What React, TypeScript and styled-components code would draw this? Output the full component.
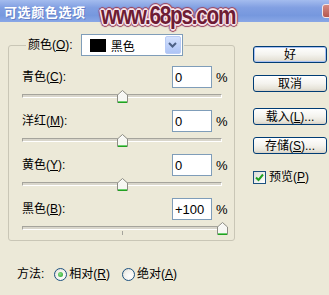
import React from "react";
import styled, { createGlobalStyle } from "styled-components";

const Global = createGlobalStyle`
  html, body { margin: 0; padding: 0; background: #ece9d8; }
  body {
    font-family: "Liberation Sans", "Noto Sans CJK SC", sans-serif;
    font-size: 12px;
    color: #000;
  }
  * { box-sizing: border-box; }
`;

const Window = styled.div`
  position: relative;
  width: 329px;
  height: 295px;
  overflow: hidden;
  background: #ece9d8;
  display: flex;
  flex-direction: column;
`;

const TitleBar = styled.div`
  height: 22px;
  flex: none;
  display: flex;
  align-items: center;
  padding-left: 4px;
  background: linear-gradient(180deg, #a4bcee 0%, #819fe2 35%, #7698de 70%, #89a7e6 100%);
`;

const Title = styled.span`
  color: #fff;
  font-family: "Noto Sans CJK SC", sans-serif;
  font-size: 13px;
  font-weight: bold;
  letter-spacing: 0.6px;
  text-shadow: 1px 1px 0 rgba(50, 70, 150, 0.35);
`;

const CloseBtn = styled.div`
  margin-left: auto;
  margin-right: -14px;
  width: 21px;
  height: 14px;
  border: 1px solid #f3e6e6;
  border-radius: 3px;
  background: linear-gradient(180deg, #d58a82, #b5574f);
`;

const Watermark = styled.div`
  position: absolute;
  left: 101px;
  top: 1px;
  font-family: "Liberation Sans", Arial, sans-serif;
  font-weight: bold;
  font-size: 25px;
  letter-spacing: -1.5px;
  transform: scaleX(0.83);
  transform-origin: left top;
  color: #6e1c35;
  text-shadow:
    1px 0 0 #f8e6ec, -1px 0 0 #f8e6ec, 0 1px 0 #f8e6ec, 0 -1px 0 #f8e6ec,
    1px 1px 0 #f8e6ec, -1px -1px 0 #f8e6ec, 1px -1px 0 #f8e6ec, -1px 1px 0 #f8e6ec,
    2px 0 0 #edc9d6, -2px 0 0 #edc9d6, 0 2px 0 #edc9d6, 0 -2px 0 #edc9d6,
    2px 2px 1px #9a4a64, -2px -2px 1px #9a4a64, 2px -2px 1px #9a4a64, -2px 2px 1px #9a4a64,
    3px 0 1px #9a4a64, -3px 0 1px #9a4a64, 0 3px 1px #9a4a64, 0 -3px 1px #9a4a64;
`;

const Body = styled.div`
  display: flex;
  align-items: flex-start;
  flex: none;
`;

const GroupBox = styled.div`
  margin: 23px 0 0 8px;
  width: 227px;
  height: 196px;
  border: 1px solid #c9c6b6;
  border-radius: 3px;
  padding-left: 13px;
  display: flex;
  flex-direction: column;
`;

const Legend = styled.div`
  align-self: flex-start;
  display: flex;
  align-items: center;
  gap: 8px;
  height: 22px;
  margin: -12px 0 0 4px;
  padding: 0 1px 0 2px;
  background: #ece9d8;
`;

const Label = styled.span`
  white-space: nowrap;
  font-size: 12px;
  line-height: 14px;
`;

const Select = styled.div`
  width: 102px;
  height: 22px;
  border: 1px solid #7f9db9;
  background: #fff;
  display: flex;
  align-items: center;
  padding-left: 8px;
`;

const Swatch = styled.div<{ $color: string }>`
  width: 16px;
  height: 13px;
  background: ${(p) => p.$color};
`;

const SelectText = styled.span`
  margin-left: 5px;
  font-size: 12px;
`;

const ArrowBtn = styled.div`
  margin-left: auto;
  margin-right: 1px;
  width: 16px;
  height: 18px;
  border: 1px solid #b8cbf5;
  border-radius: 2px;
  background: linear-gradient(180deg, #d4e1fd 0%, #bccff9 60%, #aec4f5 100%);
  display: flex;
  align-items: center;
  justify-content: center;
`;

const Rows = styled.div`
  margin-top: 10px;
  display: flex;
  flex-direction: column;
`;

const Row = styled.div`
  display: grid;
  grid-template-columns: 146px 40px auto;
  column-gap: 4px;
  align-items: center;
  height: 22px;
  width: 204px;
`;

const NumBox = styled.div`
  height: 22px;
  border: 1px solid #7f9db9;
  background: #fff;
  display: flex;
  align-items: center;
  padding-left: 2px;
  font-family: "Liberation Sans", sans-serif;
  font-size: 13px;
`;

const Pct = styled.span`
  font-family: "Liberation Sans", sans-serif;
  font-size: 13px;
`;

const Slider = styled.div`
  position: relative;
  width: 200px;
  height: 22px;
  padding-top: 6px;
`;

const Track = styled.div`
  height: 4px;
  border-top: 1px solid #a5a49c;
  border-left: 1px solid #a5a49c;
  border-bottom: 1px solid #ffffff;
  border-right: 1px solid #ffffff;
  background: #d9d6cb;
`;

const Tick = styled.div`
  position: absolute;
  left: 100px;
  top: 11px;
  width: 1px;
  height: 4px;
  background: #a5a49c;
`;

const ThumbWrap = styled.div`
  position: absolute;
  top: 2px;
  width: 11px;
  height: 13px;
`;

const RightCol = styled.div`
  margin: 24px 0 0 18px;
  display: flex;
  flex-direction: column;
`;

const Button = styled.div<{ $default?: boolean; $gap?: number }>`
  width: 74px;
  height: 17px;
  margin-top: ${(p) => p.$gap ?? 0}px;
  border: 1px solid #003c74;
  border-radius: 3px;
  background: linear-gradient(180deg, #ffffff 0%, #f4f3ee 50%, #e6e3d8 85%, #d6d0c5 100%);
  box-shadow: ${(p) => (p.$default ? "inset 0 0 0 1px #a9c1f2" : "none")};
  display: flex;
  align-items: center;
  justify-content: center;
  font-size: 12px;
  line-height: 14px;
`;

const CheckRow = styled.div`
  margin-top: 16px;
  display: flex;
  align-items: center;
  gap: 3px;
`;

const CheckBox = styled.div`
  width: 13px;
  height: 13px;
  border: 1px solid #1c5180;
  background: linear-gradient(135deg, #dcdcd7, #ffffff);
  display: flex;
  align-items: center;
  justify-content: center;
`;

const Footer = styled.div`
  margin-top: 26px;
  height: 14px;
  padding-left: 17px;
  display: flex;
  align-items: center;
`;

const Radio = styled.div<{ $gap: number }>`
  margin-left: ${(p) => p.$gap}px;
  margin-right: 2px;
  width: 13px;
  height: 13px;
  border-radius: 50%;
  border: 1px solid #1c5180;
  background: radial-gradient(circle at 65% 65%, #ffffff 0%, #f2f1ec 55%, #d4d2c8 100%);
  display: flex;
  align-items: center;
  justify-content: center;
`;

const Dot = styled.div`
  width: 5px;
  height: 5px;
  border-radius: 50%;
  background: radial-gradient(circle at 40% 40%, #8be08b, #21a121);
`;

const Thumb = ({ value }: { value: number }) => (
  <ThumbWrap style={{ left: `${100.5 + value - 5.5}px` }}>
    <svg width="11" height="13" viewBox="0 0 11 13">
      <path d="M0.5 5 L5.5 0.5 L10.5 5 L10.5 12.5 L0.5 12.5 Z" fill="#f7f7f3" stroke="#8d8c84" />
      <path d="M1 11.5 H10" stroke="#6fcf6f" />
      <path d="M1 12.5 H10" stroke="#21a121" />
      <path d="M1.5 5.3 L5.5 1.7" stroke="#ffffff" />
    </svg>
  </ThumbWrap>
);

const channels = [
  { name: "青色", key: "C", value: 0 },
  { name: "洋红", key: "M", value: 0 },
  { name: "黄色", key: "Y", value: 0 },
  { name: "黑色", key: "B", value: 100 },
];

export default function App() {
  return (
    <>
      <Global />
      <Window>
        <TitleBar>
          <Title>可选颜色选项</Title>
          <CloseBtn />
        </TitleBar>
        <Watermark>www.68ps.com</Watermark>
        <Body>
          <GroupBox>
            <Legend>
              <Label>
                颜色(<u>O</u>):
              </Label>
              <Select>
                <Swatch $color="#000" />
                <SelectText>黑色</SelectText>
                <ArrowBtn>
                  <svg width="9" height="6" viewBox="0 0 9 6">
                    <path d="M1 1 L4.5 4.5 L8 1" fill="none" stroke="#4d6185" strokeWidth="2" />
                  </svg>
                </ArrowBtn>
              </Select>
            </Legend>
            <Rows>
              {channels.map((c) => (
                <React.Fragment key={c.key}>
                  <Row>
                    <Label>
                      {c.name}(<u>{c.key}</u>):
                    </Label>
                    <NumBox>{c.value > 0 ? `+${c.value}` : c.value}</NumBox>
                    <Pct>%</Pct>
                  </Row>
                  <Slider>
                    <Track />
                    <Tick />
                    <Thumb value={c.value} />
                  </Slider>
                </React.Fragment>
              ))}
            </Rows>
          </GroupBox>
          <RightCol>
            <Button $default>好</Button>
            <Button $gap={12}>取消</Button>
            <Button $gap={16}>
              载入(<u>L</u>)...
            </Button>
            <Button $gap={12}>
              存储(<u>S</u>)...
            </Button>
            <CheckRow>
              <CheckBox>
                <svg width="9" height="9" viewBox="0 0 9 9">
                  <path d="M1 4.5 L3.5 7 L8 1.5" fill="none" stroke="#21a121" strokeWidth="2" />
                </svg>
              </CheckBox>
              <Label>
                预览(<u>P</u>)
              </Label>
            </CheckRow>
          </RightCol>
        </Body>
        <Footer>
          <Label>方法:</Label>
          <Radio $gap={10}>
            <Dot />
          </Radio>
          <Label>
            相对(<u>R</u>)
          </Label>
          <Radio $gap={12} />
          <Label>
            绝对(<u>A</u>)
          </Label>
        </Footer>
      </Window>
    </>
  );
}
